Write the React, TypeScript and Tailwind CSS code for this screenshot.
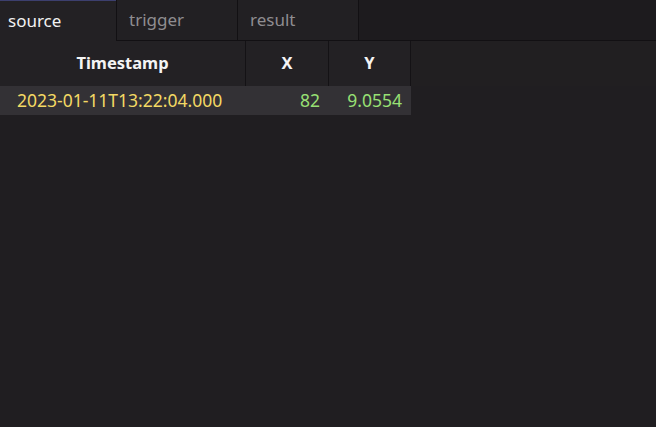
export default function App() {
  const tabs = ['source', 'trigger', 'result'];
  return (
    <div className="h-[427px] w-[656px] overflow-hidden bg-[#201e21] font-['Noto_Sans',sans-serif]">
      {/* tabs */}
      <div className="flex h-[41px] bg-[#1d1b1e]">
        {tabs.map((t, i) => (
          <div
            key={t}
            className={
              i === 0
                ? 'flex w-[116px] items-center border-t border-[#3c3f6e] bg-[#232124] pl-[8px] text-[17px] text-[#f2f2f2]'
                : 'flex w-[121px] items-center border-b border-l border-[#121013] bg-[#222023] pl-[12px] text-[17px] text-[#8f8d90]'
            }
          >
            {t}
          </div>
        ))}
        <div className="flex-1 border-b border-l border-[#121013] bg-[#1d1b1e]" />
      </div>

      {/* table */}
      <div className="flex h-[45px]">
        <div className="flex w-[246px] items-center justify-center border-r border-[#141215] bg-[#232124] text-[16.5px] font-bold text-[#f4f4f4]">
          Timestamp
        </div>
        <div className="flex w-[83px] items-center justify-center border-r border-[#141215] bg-[#232124] text-[16.5px] font-bold text-[#f4f4f4]">
          X
        </div>
        <div className="flex w-[82px] items-center justify-center border-r border-[#141215] bg-[#232124] text-[16.5px] font-bold text-[#f4f4f4]">
          Y
        </div>
        <div className="flex-1 bg-[#211f21]" />
      </div>
      <div className="flex h-[29px] w-[411px] items-center bg-[#333135] text-[17.5px] leading-none">
        <div className="w-[246px] pl-[17px] text-[#f3d964]">2023-01-11T13:22:04.000</div>
        <div className="w-[83px] pr-[9px] text-right text-[#98e074]">82</div>
        <div className="w-[82px] pr-[9px] text-right text-[#98e074]">9.0554</div>
      </div>
    </div>
  );
}
